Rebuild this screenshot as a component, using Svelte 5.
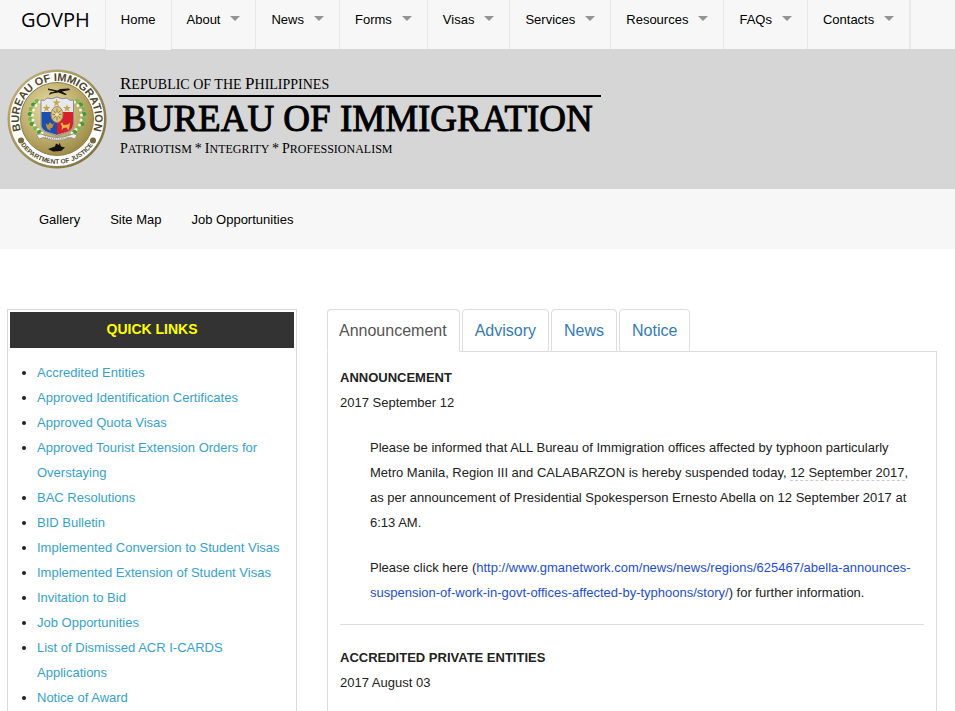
<script lang="ts">
  const menu = [
    { label: 'Home', dropdown: false },
    { label: 'About', dropdown: true },
    { label: 'News', dropdown: true },
    { label: 'Forms', dropdown: true },
    { label: 'Visas', dropdown: true },
    { label: 'Services', dropdown: true },
    { label: 'Resources', dropdown: true },
    { label: 'FAQs', dropdown: true },
    { label: 'Contacts', dropdown: true },
  ];

  const auxLinks = ['Gallery', 'Site Map', 'Job Opportunities'];

  const quickLinks = [
    'Accredited Entities',
    'Approved Identification Certificates',
    'Approved Quota Visas',
    'Approved Tourist Extension Orders for Overstaying',
    'BAC Resolutions',
    'BID Bulletin',
    'Implemented Conversion to Student Visas',
    'Implemented Extension of Student Visas',
    'Invitation to Bid',
    'Job Opportunities',
    'List of Dismissed ACR I-CARDS Applications',
    'Notice of Award',
  ];

  const tabs = ['Announcement', 'Advisory', 'News', 'Notice'];
  let activeTab = $state('Announcement');

  const leaves = [
    [60, 64], [53, 71], [48, 80], [46, 90], [47, 100], [50, 110], [57, 119], [65, 126],
  ];
  const stars = [[79, 78], [99, 67], [120, 78]];
</script>

<div class="page">
  <nav class="top-bar" aria-label="Main">
    <a class="brand" href="#govph">GOVPH</a>
    <ul class="menu">
      {#each menu as item}
        <li class:home={!item.dropdown}>
          <a href="#{item.label.toLowerCase()}" class:has-dropdown={item.dropdown}>{item.label}</a>
        </li>
      {/each}
    </ul>
  </nav>

  <header class="masthead">
    <svg class="seal" viewBox="0 0 200 200" role="img" aria-label="Bureau of Immigration seal">
      <defs>
        <radialGradient id="gold" cx="0.4" cy="0.35" r="0.75">
          <stop offset="0" stop-color="#e9dfa8" />
          <stop offset="0.5" stop-color="#c3b271" />
          <stop offset="1" stop-color="#93803f" />
        </radialGradient>
        <linearGradient id="rim" x1="0" y1="0" x2="1" y2="1">
          <stop offset="0" stop-color="#c5b77d" />
          <stop offset="1" stop-color="#766838" />
        </linearGradient>
        <path id="arc-top" d="M 29 127 A 76 76 0 1 1 171 127" />
        <path id="arc-bottom" d="M 24 146 A 88 88 0 0 0 176 146" />
      </defs>
      <circle cx="100" cy="100" r="99" fill="url(#rim)" />
      <circle cx="100" cy="100" r="94" fill="#fff" />
      <circle cx="100" cy="100" r="73" fill="url(#gold)" stroke="#8d7e49" stroke-width="2" />
      <text class="seal-top"><textPath href="#arc-top" startOffset="50%">BUREAU OF IMMIGRATION</textPath></text>
      <text class="seal-bottom"><textPath href="#arc-bottom" startOffset="50%">DEPARTMENT OF JUSTICE</textPath></text>
      <circle cx="28" cy="143" r="6" fill="#746839" />
      <circle cx="172" cy="143" r="6" fill="#746839" />

      {#each leaves as [x, y], i}
        <ellipse cx={x} cy={y} rx="5" ry="4" fill={i % 2 ? '#3f9b3c' : '#78b94d'} />
        <circle cx={x + 5} cy={y + 2} r="3" fill="#f4f6df" />
        <ellipse cx={200 - x} cy={y} rx="5" ry="4" fill={i % 2 ? '#3f9b3c' : '#78b94d'} />
        <circle cx={195 - x} cy={y + 2} r="3" fill="#f4f6df" />
      {/each}

      <path d="M82 39 L101 43 L106 40 L124 39 L126 42 L110 45 L120 51 L116 52 L103 47 L90 49 L84 52 L86 47 L97 45 L82 42 Z" fill="#15150e" />

      <path d="M68 62 Q76 65 80 58 Q90 62 100 56 Q110 62 120 58 Q125 65 133 62 V110 Q133 124 118 127 L100 134 L82 127 Q68 124 68 110 Z" fill="#e7e8ec" stroke="#8c8d92" stroke-width="2" />
      <path d="M69 86 H100 V132 L82 126 Q69 123 69 110 Z" fill="#1c4fae" />
      <path d="M100 86 H132 V110 Q132 123 118 126 L100 132 Z" fill="#d7202a" />
      {#each stars as [x, y]}
        <path transform="translate({x} {y})" d="M0 -8 L2 -2 L8 -2 L3 2 L5 8 L0 4 L-5 8 L-3 2 L-8 -2 L-2 -2 Z" fill="#c7a547" />
      {/each}
      <ellipse cx="100" cy="91" rx="12" ry="16" fill="#d9c687" stroke="#9b8751" stroke-width="2" />
      <path d="M100 79 V103 M91 91 H109 M93 83 L107 99 M107 83 L93 99" stroke="#8f7d4a" stroke-width="2" />
      <circle cx="100" cy="91" r="4" fill="#eee0a5" />
      <path d="M77 108 L82 112 L86 106 L90 111 L94 108 L91 117 L86 119 L88 124 L81 120 L79 116 Z" fill="#bd9142" />
      <path d="M107 109 L111 107 L113 112 L122 111 L126 107 L125 115 L123 123 L119 117 L113 118 L109 123 L110 115 Z" fill="#efb54c" />
      <path d="M59 132 Q66 127 74 132 Q100 142 126 132 Q134 127 140 132 L136 140 L127 137 Q100 149 73 137 L64 140 Z" fill="#f0efea" stroke="#96927c" stroke-width="2" />
      <path d="M76 136 Q100 144 124 136" fill="none" stroke="#77776c" stroke-width="2" stroke-dasharray="2 2" />
      <path d="M82 160 L96 155 L98 149 L104 152 L105 147 L108 155 L116 157 L108 164 L92 165 Z" fill="#11120c" />
    </svg>
    <div class="titles">
      <p class="republic"><b>R</b>epublic of the <b>P</b>hilippines</p>
      <h1>BUREAU OF IMMIGRATION</h1>
      <p class="motto"><b>P</b>atriotism <b>*</b> <b>I</b>ntegrity <b>*</b> <b>P</b>rofessionalism</p>
    </div>
  </header>

  <nav class="aux-bar" aria-label="Auxiliary">
    {#each auxLinks as link}
      <a href="#{link.toLowerCase().replaceAll(' ', '-')}">{link}</a>
    {/each}
  </nav>

  <main class="content">
    <aside class="sidebar">
      <h2>QUICK LINKS</h2>
      <ul>
        {#each quickLinks as link}
          <li><a href="#{link.toLowerCase().replaceAll(' ', '-')}">{link}</a></li>
        {/each}
      </ul>
    </aside>

    <section class="news">
      <div class="tabs" role="tablist">
        {#each tabs as tab}
          <button
            role="tab"
            class:active={activeTab === tab}
            aria-selected={activeTab === tab}
            onclick={() => (activeTab = tab)}>{tab}</button>
        {/each}
      </div>
      <div class="panel" role="tabpanel">
        <article>
          <h3>ANNOUNCEMENT</h3>
          <time datetime="2017-09-12">2017 September 12</time>
          <div class="body">
            <p>
              Please be informed that ALL Bureau of Immigration offices affected by typhoon particularly
              Metro Manila, Region III and CALABARZON is hereby suspended today, <span class="date">12 September 2017</span>,
              as per announcement of Presidential Spokesperson Ernesto Abella on 12 September 2017 at 6:13 AM.
            </p>
            <p>
              Please click here (<a href="http://www.gmanetwork.com/news/news/regions/625467/abella-announces-suspension-of-work-in-govt-offices-affected-by-typhoons/story/">http://www.gmanetwork.com/news/news/regions/625467/abella-announces-suspension-of-work-in-govt-offices-affected-by-typhoons/story/</a>) for further information.
            </p>
          </div>
        </article>
        <article>
          <h3>ACCREDITED PRIVATE ENTITIES</h3>
          <time datetime="2017-08-03">2017 August 03</time>
        </article>
      </div>
    </section>
  </main>
</div>

<style>
  :global(body) {
    background: #fff;
  }

  .page {
    display: flex;
    flex-direction: column;
    min-height: 100vh;
    font-family: "Liberation Sans", Arial, sans-serif;
    font-size: 13px;
    line-height: 25px;
    color: #222;
  }

  a {
    text-decoration: none;
  }

  ul,
  p,
  h1,
  h2,
  h3 {
    margin: 0;
    padding: 0;
  }

  .top-bar {
    display: flex;
    height: 49px;
    background: #f7f7f7;
  }

  .brand {
    padding: 0 15px 0 21px;
    font-family: "Open Sans", sans-serif;
    font-size: 20px;
    line-height: 40px;
    color: #000;
  }

  .menu {
    display: flex;
    list-style: none;
    border-right: 1px solid #e8e8e8;
  }

  .menu li {
    border-left: 1px solid #e8e8e8;
    background: #f7f7f7;
  }

  .menu li:last-child {
    border-right: 1px solid #e8e8e8;
  }

  .menu .home {
    position: relative;
    margin-bottom: -1px;
  }

  .menu a {
    display: flex;
    align-items: center;
    gap: 10px;
    padding: 0 15px;
    line-height: 40px;
    color: #000;
  }

  .has-dropdown::after {
    content: '';
    border: 5px solid transparent;
    border-top-color: #949494;
    border-bottom: 0;
    margin-bottom: 3px;
  }

  .masthead {
    display: flex;
    align-items: flex-start;
    gap: 12px;
    height: 120px;
    padding: 20px 7px 0;
    background: #d6d6d6;
  }

  .seal {
    flex: none;
    width: 100px;
    height: 100px;
  }

  .seal text {
    font-family: "Liberation Sans", Arial, sans-serif;
    font-weight: bold;
    text-anchor: middle;
    fill: #4f482b;
  }

  .seal .seal-top {
    font-size: 22px;
  }

  .seal .seal-bottom {
    font-size: 13px;
  }

  .titles {
    font-family: "Liberation Serif", "Times New Roman", serif;
    color: #000;
  }

  .republic,
  .motto {
    padding-left: 1px;
    text-transform: uppercase;
  }

  .titles b {
    font-weight: normal;
  }

  .republic {
    padding-top: 6px;
    font-size: 14px;
    line-height: 20px;
  }

  .republic b {
    font-size: 17px;
    line-height: 16px;
  }

  .titles h1 {
    border-top: 2px solid #000;
    padding: 0 8px 0 3px;
    font-size: 37px;
    font-weight: normal;
    line-height: 44px;
    -webkit-text-stroke: 1px #000;
  }

  .motto {
    font-size: 12px;
    line-height: 16px;
  }

  .motto b {
    font-size: 14px;
  }

  .aux-bar {
    display: flex;
    gap: 30px;
    padding: 1px 39px 0;
    background: #f7f7f7;
    line-height: 59px;
  }

  .aux-bar a {
    color: #000;
  }

  .content {
    flex: 1;
    display: grid;
    grid-template-columns: 29fr 61fr;
    gap: 30px;
    padding: 60px 18px 0 7px;
  }

  .sidebar {
    border: 1px solid #d9d9d9;
    border-bottom: 0;
    padding: 2px 2px 0;
  }

  .sidebar h2 {
    padding-bottom: 2px;
    background: #333;
    color: #ff0;
    font-size: 14px;
    line-height: 34px;
    text-align: center;
  }

  .sidebar ul {
    padding: 12px 8px 0 27px;
  }

  .sidebar a {
    color: #36a2cc;
  }

  .news {
    display: flex;
    flex-direction: column;
    min-width: 0;
  }

  .tabs {
    display: flex;
    gap: 2px;
    margin-bottom: -1px;
  }

  .tabs button {
    position: relative;
    border: 1px solid #ddd;
    border-radius: 4px 4px 0 0;
    padding: 0 12px;
    background: #fff;
    color: #337ab7;
    font-family: inherit;
    font-size: 16px;
    line-height: 41px;
    cursor: pointer;
  }

  .tabs button.active {
    border-bottom-color: #fff;
    padding-left: 11px;
    color: #555;
  }

  .panel {
    flex: 1;
    border: 1px solid #ddd;
    border-bottom: 0;
    padding: 13px 12px 0;
  }

  article + article {
    border-top: 1px solid #ddd;
    padding-top: 20px;
  }

  h3 {
    font-size: 13px;
    line-height: 25px;
  }

  time {
    display: block;
  }

  .body {
    padding: 20px 0 19px 30px;
  }

  .body p + p {
    margin-top: 20px;
  }

  .body a {
    color: #1d4ed0;
  }

  .date {
    border-bottom: 1px dashed #ccc;
  }
</style>
